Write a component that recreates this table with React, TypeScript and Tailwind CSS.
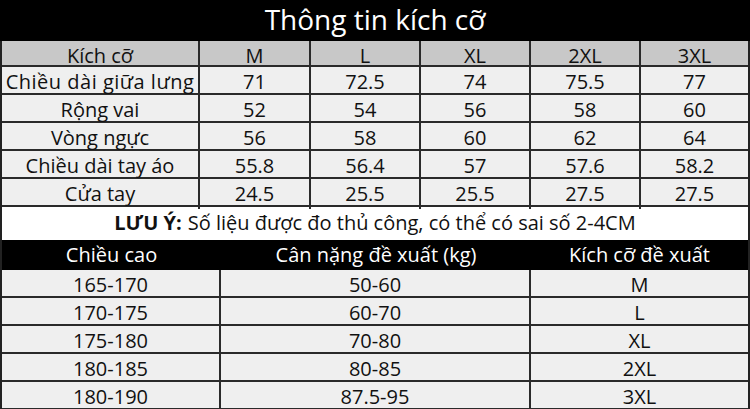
const sizes = ['M', 'L', 'XL', '2XL', '3XL'];

const measures = [
  { name: 'Chiều dài giữa lưng', values: ['71', '72.5', '74', '75.5', '77'], wide: true },
  { name: 'Rộng vai', values: ['52', '54', '56', '58', '60'] },
  { name: 'Vòng ngực', values: ['56', '58', '60', '62', '64'] },
  { name: 'Chiều dài tay áo', values: ['55.8', '56.4', '57', '57.6', '58.2'] },
  { name: 'Cửa tay', values: ['24.5', '25.5', '25.5', '27.5', '27.5'] },
];

const advice = [
  ['165-170', '50-60', 'M'],
  ['170-175', '60-70', 'L'],
  ['175-180', '70-80', 'XL'],
  ['180-185', '80-85', '2XL'],
  ['180-190', '87.5-95', '3XL'],
];

const topCols = 'grid grid-cols-[198px_111px_110px_110px_110px_1fr]';
const bottomCols = 'grid grid-cols-[219px_310px_1fr]';

export default function App() {
  return (
    <div className="w-[750px] h-[409px] overflow-hidden bg-white text-[#111] font-['Open_Sans','Noto_Sans',sans-serif]">
      <div className="h-[41px] bg-black text-white text-[28px] flex items-center justify-center pb-[3px]">
        Thông tin kích cỡ
      </div>

      <div className="border-x-2 border-[#222]">
        <div className={`${topCols} h-[26px] bg-[#c8c8c8] border-b-2 border-[#2a2a2a] text-[20px]`}>
          <div className="flex items-center justify-center border-r-2 border-[#2a2a2a]">Kích cỡ</div>
          {sizes.map((s, i) => (
            <div
              key={s}
              className={`flex items-center justify-center ${i < sizes.length - 1 ? 'border-r-2 border-[#2a2a2a]' : ''}`}
            >
              {s}
            </div>
          ))}
        </div>

        {measures.map(row => (
          <div key={row.name} className={`${topCols} h-[28px] bg-[#efefef] border-b-2 border-[#2a2a2a] text-[20px]`}>
            <div
              className={`flex items-center justify-center border-r-2 border-[#2a2a2a] whitespace-nowrap ${
                row.wide ? 'tracking-[0.5px]' : ''
              }`}
            >
              {row.name}
            </div>
            {row.values.map((v, i) => (
              <div
                key={i}
                className={`flex items-center justify-center ${i < row.values.length - 1 ? 'border-r-2 border-[#2a2a2a]' : ''}`}
              >
                {v}
              </div>
            ))}
          </div>
        ))}

        <div className="h-[33px] bg-white flex items-center justify-center text-[20px] pb-[2px]">
          <span className="font-bold mr-[6px]">LƯU Ý:</span>
          <span>Số liệu được đo thủ công, có thể có sai số 2-4CM</span>
        </div>

        <div className={`${bottomCols} h-[30px] bg-black text-white text-[20px]`}>
          <div className="flex items-center justify-center">Chiều cao</div>
          <div className="flex items-center justify-center">Cân nặng đề xuất (kg)</div>
          <div className="flex items-center justify-center">Kích cỡ đề xuất</div>
        </div>

        {advice.map(row => (
          <div key={row[0] + row[2]} className={`${bottomCols} h-[28px] bg-[#efefef] border-b-2 border-[#2a2a2a] text-[20px]`}>
            <div className="flex items-center justify-center border-r-2 border-[#2a2a2a]">{row[0]}</div>
            <div className="flex items-center justify-center border-r-2 border-[#2a2a2a]">{row[1]}</div>
            <div className="flex items-center justify-center">{row[2]}</div>
          </div>
        ))}
      </div>
    </div>
  );
}
